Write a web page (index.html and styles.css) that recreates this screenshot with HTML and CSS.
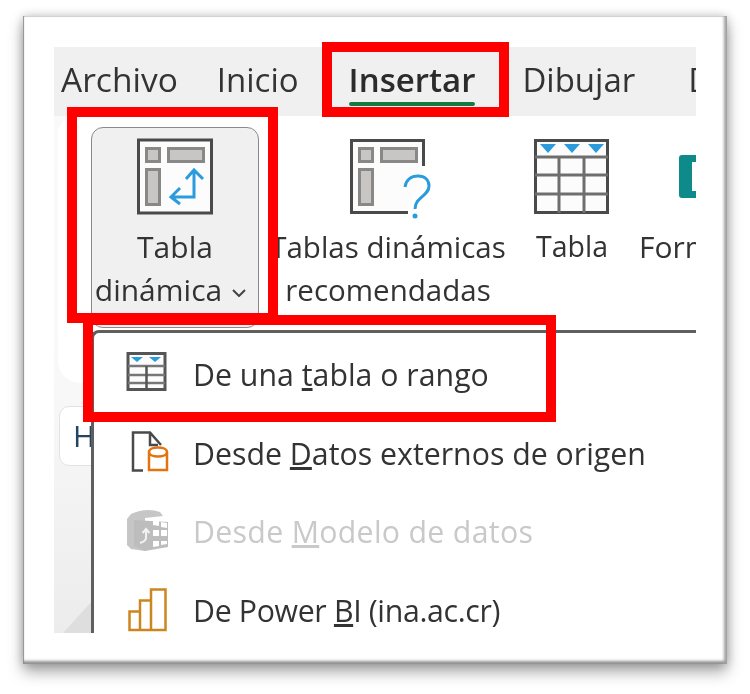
FILE: index.html
```html
<!DOCTYPE html>
<html lang="es">
<head>
<meta charset="utf-8">
<title>Tabla dinámica</title>
<link rel="stylesheet" href="styles.css">
</head>
<body>
<div class="frame">
  <div class="shot">
    <nav class="tabs">
      <span class="tab tab-archivo">Archivo</span>
      <span class="tab tab-inicio">Inicio</span>
      <span class="tab tab-active">Insertar</span>
      <span class="tab tab-dibujar">Dibujar</span>
      <span class="tab tab-next">Disposición</span>
    </nav>
    <section class="ribbon">
      <div class="rbtn rbtn-pivot">
        <svg class="ricon" width="78" height="78" viewBox="135 137 78 78">
          <rect x="137.5" y="140" width="73" height="73" fill="#fcfcfc" stroke="#4a4a4a" stroke-width="3"/>
          <g fill="#c8c6c4" stroke="#8a8886" stroke-width="3">
            <rect x="145.500" y="148.500" width="13" height="13"/>
            <rect x="167.500" y="148.500" width="35" height="13"/>
            <rect x="145.500" y="169.500" width="13" height="35"/>
          </g>
          <path d="M193 171V197H171M185 179L193 170L202 179M179 188L170 197L179 204" fill="none" stroke="#2a9bdc" stroke-width="3"/>
        </svg>
        <span class="rlabel">Tabla<span class="rline2">dinámica<svg class="chev" width="14" height="8" viewBox="0 0 14 8"><path d="M1 1L7 7L13 1" fill="none" stroke="#444" stroke-width="2"/></svg></span></span>
      </div>
      <div class="rbtn rbtn-rec">
        <svg class="ricon" width="86" height="84" viewBox="348 137 86 84">
          <path d="M423.500 166V140.500H351.500V212.500H408" fill="#fcfcfc" stroke="#4a4a4a" stroke-width="3"/>
          <g fill="#c8c6c4" stroke="#8a8886" stroke-width="3">
            <rect x="359.500" y="148.500" width="13" height="13"/>
            <rect x="381.500" y="148.500" width="35" height="13"/>
            <rect x="359.500" y="169.500" width="13" height="35"/>
          </g>
          <path d="M405 187C406 180 411 176 418 176C425 176 429 180 429 186C429 196 415 197 415 209" fill="none" stroke="#2a9bdc" stroke-width="3"/>
          <circle cx="415" cy="216" r="2.500" fill="#2a9bdc"/>
        </svg>
        <span class="rlabel">Tablas dinámicas<br>recomendadas</span>
      </div>
      <div class="rbtn rbtn-table">
        <svg class="ricon" width="78" height="78" viewBox="534 137 78 78">
          <rect x="536.500" y="140.500" width="72" height="72" fill="#fcfcfc" stroke="#4a4a4a" stroke-width="3"/>
          <path d="M536 157H609M536 175H609M536 194H609M560 157V213M585 157V213" fill="none" stroke="#6e6e6e" stroke-width="3"/>
          <path d="M541 144H557L549 153ZM565 144H581L573 153ZM589 144H605L597 153Z" fill="#2a9bdc"/>
        </svg>
        <span class="rlabel">Tabla</span>
      </div>
      <div class="rbtn rbtn-form">
        <svg class="ricon" width="60" height="78" viewBox="677 137 60 78">
          <path d="M682 155H737V198H682Q679 198 679 195V158Q679 155 682 155Z" fill="#0e8a8a"/>
          <path d="M692 162H737V191H692Z" fill="#fff"/>
        </svg>
        <span class="rlabel">Formularios</span>
      </div>
    </section>
    <div class="name-box">H</div>
    <div class="corner"></div>
    <div class="menu">
      <div class="mitem">
        <svg class="micon" width="46" height="46" viewBox="124 352 46 46">
          <rect x="128" y="353.500" width="37" height="36" fill="#fcfcfc" stroke="#555" stroke-width="3"/>
          <path d="M128 366H165M128 375H165M128 383H165" fill="none" stroke="#777" stroke-width="2.500"/>
          <path d="M146.500 366V390" fill="none" stroke="#555" stroke-width="2.500"/>
          <path d="M131 357H143L137 362ZM149 357H161L155 362Z" fill="#2a9bdc"/>
        </svg>
        <span class="mtext">De una <u>t</u>abla o rango</span>
      </div>
      <div class="mitem">
        <svg class="micon" width="46" height="46" viewBox="124 431 46 46">
          <path d="M143 470.500H133V432.500H150L161 445M150 432.500V445H158" fill="none" stroke="#4a4a4a" stroke-width="2.500"/>
          <path d="M149 452C149 446 167 446 167 452V470H149ZM149 452C149 458 167 458 167 452" fill="#fff" stroke="#e3730e" stroke-width="2.500"/>
        </svg>
        <span class="mtext">Desde <u>D</u>atos externos de origen</span>
      </div>
      <div class="mitem mitem-off">
        <svg class="micon" width="46" height="46" viewBox="124 509 46 46">
          <path d="M127 519L131 514Q146 507 160 512L163 516L145 518V551L131 549L127 545Z" fill="#c6c6c6"/>
          <path d="M134 520L168 522V547L145 551L134 546Z" fill="#bdbdbd"/>
          <path d="M153 519L159 521V526L153 525ZM161 522L167 523V528L161 527ZM153 530H159V536H153ZM161 530H167V536H161ZM153 541H159V546L153 547ZM161 541H167V544L161 545Z" fill="#fff"/>
          <path d="M146 530V538Q146 541 140 543M142.500 533L146 529L149.500 533" fill="none" stroke="#f2f2f2" stroke-width="2"/>
        </svg>
        <span class="mtext mtext-wide">Desde <u>M</u>odelo de datos</span>
      </div>
      <div class="mitem">
        <svg class="micon" width="46" height="46" viewBox="124 586 46 46">
          <path d="M129.500 628V609.500H140V598.500H151V587.500H165.500V628ZM140 610V628M151 599V628" fill="#fff" stroke="#cc861f" stroke-width="2.500"/>
        </svg>
        <span class="mtext mtext-tight">De Power <u>B</u>I (ina.ac.cr)</span>
      </div>
    </div>
  </div>
  <div class="mark mark-tab"></div>
  <div class="mark mark-pivot"></div>
  <div class="mark mark-item"></div>
</div>
</body>
</html>
```

FILE: styles.css
```css
* { box-sizing: border-box; }
html, body { margin: 0; padding: 0; background: #fff; }
body {
  width: 750px;
  height: 694px;
  overflow: hidden;
  font-family: "Open Sans", "Liberation Sans", sans-serif;
  color: #333;
}
.frame {
  position: relative;
  width: 704px;
  height: 648px;
  margin: 16px 0 0 23px;
  padding: 31px;
  background: #fff;
  box-shadow:
    inset 2px 0 1px -1px #8e8e8e,
    inset -4px 0 3px -1px #a0a0a0,
    inset 0 -5px 3px -2px #909090,
    inset 0 1px 0 #dcdcdc,
    0 8px 14px rgba(0, 0, 0, .34),
    0 0 9px rgba(0, 0, 0, .2);
}
.shot {
  position: relative;
  width: 642px;
  height: 586px;
  overflow: hidden;
  background: linear-gradient(#fafafa 0, #f8f8f8 60%, #ececec 100%);
  filter: blur(.45px);
}
.tabs {
  display: flex;
  align-items: flex-start;
  height: 69px;
  padding: 10px 0 0 7px;
  background: #f0f0f0;
  font-size: 33.5px;
  line-height: 45px;
  white-space: nowrap;
}
.tab { flex: none; }
.tab-inicio { margin-left: 39px; font-size: 33px; }
.tab-active {
  margin-left: 50px;
  font-size: 33px;
  font-weight: 600;
  color: #2b2b2b;
  position: relative;
}
.tab-active::after {
  content: "";
  position: absolute;
  left: 0;
  right: 0;
  top: 45px;
  height: 4px;
  border-radius: 2px;
  background: #107c41;
}
.tab-dibujar { margin-left: 47px; font-size: 33px; }
.tab-next { margin-left: 53px; }
.ribbon {
  display: flex;
  align-items: flex-start;
  height: 267px;
  margin-left: 4px;
  padding: 11px 0 0 33px;
  background: #fff;
  border-radius: 18px 0 0 22px;
  overflow: hidden;
}
.rbtn {
  flex: none;
  display: flex;
  flex-direction: column;
  align-items: center;
  height: 201px;
  padding-top: 10px;
  white-space: nowrap;
}
.ricon { display: block; flex: none; }
.rlabel {
  display: block;
  font-size: 30px;
  line-height: 43px;
  text-align: center;
}
.rline2 { display: block; margin-left: -9px; }
.rbtn-pivot {
  width: 168px;
  background: #f0f0f0;
  border: 1px solid #8a8a8a;
  border-radius: 12px;
  padding-top: 9px;
}
.rbtn-pivot .rlabel { margin-top: 10px; }
.rbtn-rec { width: 240px; margin-left: 9px; }
.rbtn-rec .ricon { margin-left: 6px; }
.rbtn-rec .rlabel { margin-top: 4px; font-size: 29.5px; }
.rbtn-table { width: 112px; margin-left: 8px; }
.rbtn-table .rlabel { margin-top: 10px; font-size: 28.5px; }
.rbtn-form { width: 120px; align-items: flex-start; margin-left: 0; padding-left: 11px; }
.rbtn-form .ricon { margin-left: 38px; }
.rbtn-form .rlabel { margin-top: 10px; }
.chev { margin-left: 10px; vertical-align: 4px; }
.name-box {
  width: 60px;
  height: 60px;
  margin: 23px 0 0 5px;
  padding-left: 13px;
  border: 1px solid #e2e2e2;
  border-radius: 10px;
  background: #fff;
  font-size: 30px;
  line-height: 58px;
  color: #24455f;
}
.corner {
  position: absolute;
  left: 9px;
  bottom: 0;
  width: 30px;
  height: 33px;
  background: #dedede;
  clip-path: polygon(100% 0, 100% 100%, 0 100%);
}
.menu {
  position: absolute;
  left: 37px;
  top: 283px;
  right: 0;
  bottom: 0;
  padding-top: 3px;
  background: #fff;
  border-top: 3px solid #5f5f5f;
  border-left: 3px solid #5f5f5f;
  border-top-left-radius: 8px;
}
.mitem {
  display: flex;
  align-items: center;
  height: 78.5px;
  padding-left: 30px;
  white-space: nowrap;
}
.micon { display: block; flex: none; }
.mtext {
  margin-left: 23px;
  font-size: 30.3px;
  line-height: 40px;
  color: #333;
}
.mtext-wide { letter-spacing: .3px; }
.mtext-tight { letter-spacing: -.35px; }
.mitem-off .mtext { color: #c9c9c9; }
.mark {
  position: absolute;
  border: 10px solid #ff0000;
  pointer-events: none;
}
.mark-tab { left: 299px; top: 26px; width: 187px; height: 75px; }
.mark-pivot { left: 44px; top: 91px; width: 211px; height: 216px; }
.mark-item { left: 60px; top: 299px; width: 473px; height: 107px; }
```
